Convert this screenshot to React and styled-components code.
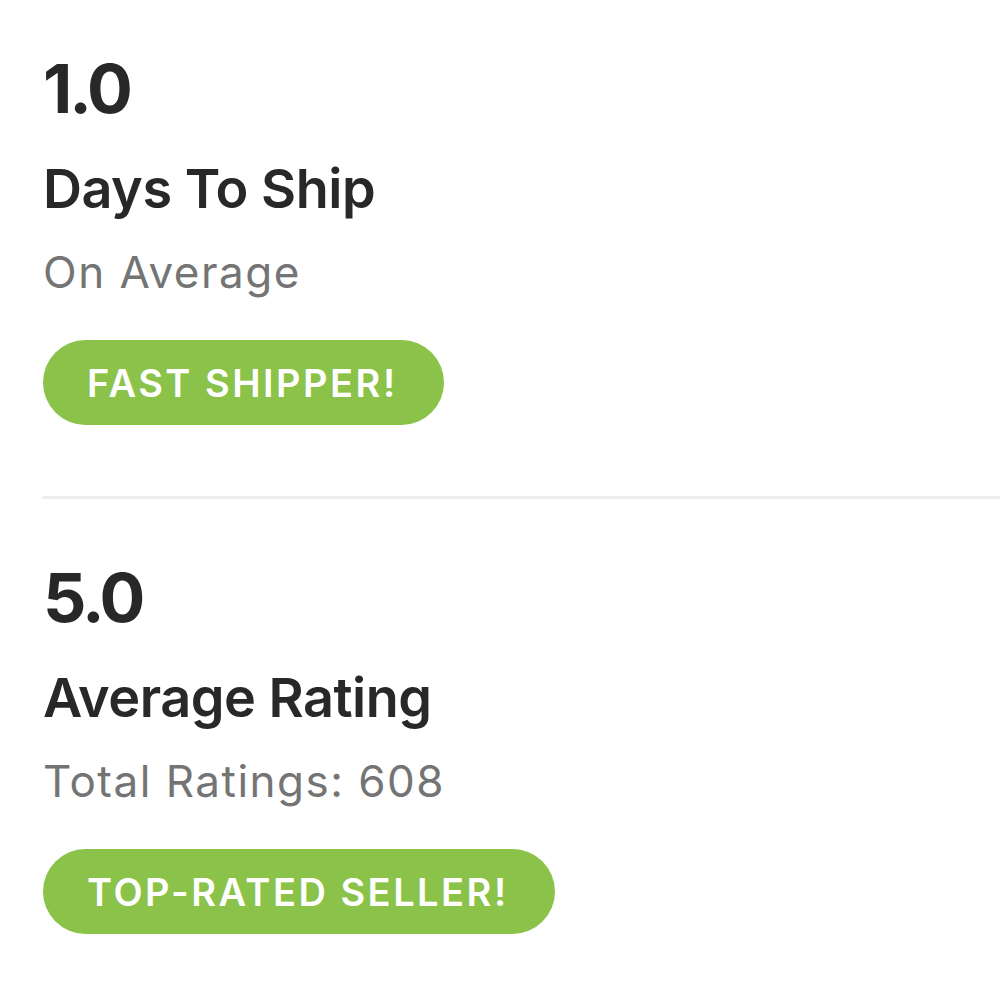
import React from 'react';
import styled, { createGlobalStyle } from 'styled-components';

const GlobalStyle = createGlobalStyle`
  body {
    margin: 0;
    background: #fff;
    font-family: "Inter", "Liberation Sans", sans-serif;
    -webkit-font-smoothing: antialiased;
  }
`;

const S = {
  Page: styled.div`
    display: flex;
    flex-direction: column;
    padding: 48px 0 0 43px;
  `,
  Section: styled.section`
    display: flex;
    flex-direction: column;
    align-items: flex-start;
    padding: ${(p) => (p.$first ? '0' : '58px')} 0 71px;
  `,
  Value: styled.div`
    font-size: 68px;
    line-height: 80px;
    font-weight: 700;
    color: #282828;
    letter-spacing: -3px;
  `,
  Title: styled.h2`
    margin: 29px 0 0;
    font-size: 54px;
    line-height: 64px;
    font-weight: 600;
    color: #282828;
    letter-spacing: -0.5px;
  `,
  Subtitle: styled.p`
    margin: 25px 0 0;
    font-size: 44px;
    line-height: 52px;
    font-weight: 400;
    color: #747474;
    letter-spacing: 1.5px;
  `,
  Badge: styled.span`
    display: inline-flex;
    align-items: center;
    height: 85px;
    margin-top: 42px;
    padding: 0 46px 0 44px;
    border-radius: 43px;
    background: #8bc34a;
    color: #fff;
    font-size: 38px;
    font-weight: 600;
    letter-spacing: 2.5px;
  `,
  Divider: styled.hr`
    margin: 0 0 0 -1px;
    border: none;
    height: 3px;
    background: #eeeeee;
  `,
};

const stats = [
  { value: '1.0', title: 'Days To Ship', subtitle: 'On Average', badge: 'FAST SHIPPER!' },
  { value: '5.0', title: 'Average Rating', subtitle: 'Total Ratings: 608', badge: 'TOP-RATED SELLER!' },
];

const App = () => (
  <>
    <GlobalStyle />
    <S.Page>
      {stats.map((s, i) => (
        <React.Fragment key={s.value}>
          {i > 0 && <S.Divider />}
          <S.Section $first={i === 0}>
            <S.Value>{s.value}</S.Value>
            <S.Title>{s.title}</S.Title>
            <S.Subtitle>{s.subtitle}</S.Subtitle>
            <S.Badge>{s.badge}</S.Badge>
          </S.Section>
        </React.Fragment>
      ))}
    </S.Page>
  </>
);

export default App;
